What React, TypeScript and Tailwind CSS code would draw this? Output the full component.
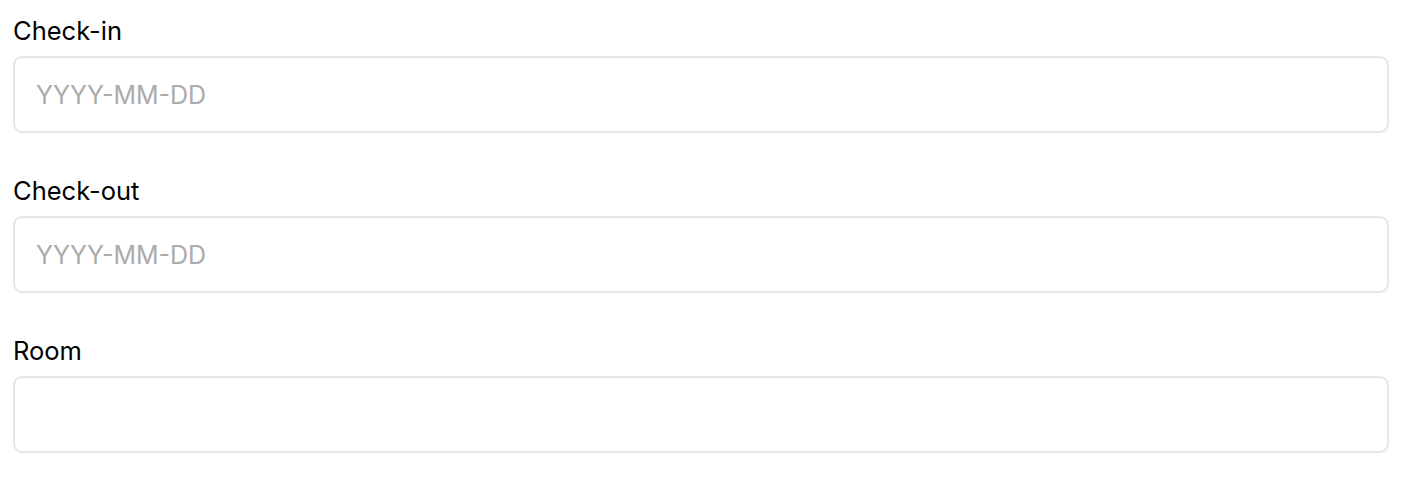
import { useState } from 'react'

export default function App() {
  const [checkIn, setCheckIn] = useState('')
  const [checkOut, setCheckOut] = useState('')
  const [room, setRoom] = useState('')

  const fields = [
    { label: 'Check-in', value: checkIn, set: setCheckIn, placeholder: 'YYYY-MM-DD' },
    { label: 'Check-out', value: checkOut, set: setCheckOut, placeholder: 'YYYY-MM-DD' },
    { label: 'Room', value: room, set: setRoom, placeholder: '' },
  ]

  return (
    <div className="min-h-screen bg-white pt-4 pl-[13px] font-['Inter',sans-serif]">
      <div className="flex w-[1376px] flex-col gap-[43px]">
        {fields.map(f => (
          <div key={f.label} className="flex flex-col">
            <label className="h-[30px] text-[25.5px] leading-[30px] text-black">{f.label}</label>
            <input
              value={f.value}
              onChange={e => f.set(e.target.value)}
              placeholder={f.placeholder}
              className="mt-[10px] h-[77px] w-full rounded-[9px] border-2 border-[#e6e6ea] bg-white px-[21px] text-[25px] text-black placeholder:text-[#ababab] focus:outline-none"
            />
          </div>
        ))}
      </div>
    </div>
  )
}
